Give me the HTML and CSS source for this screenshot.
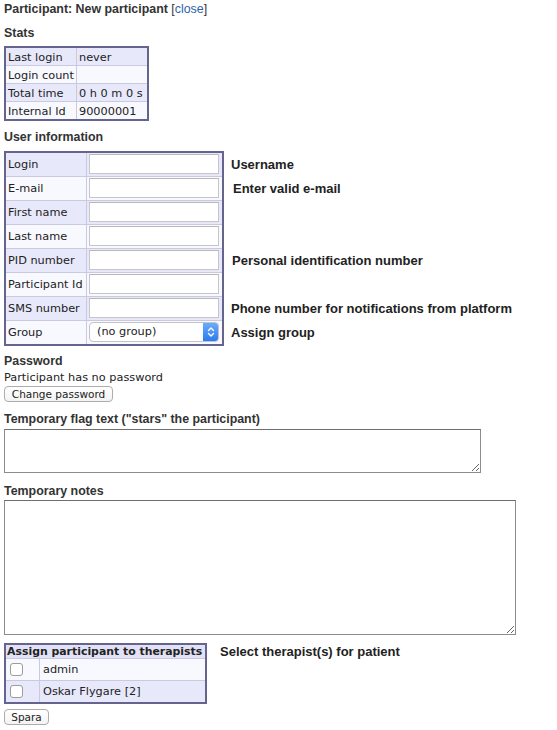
FILE: index.html
```html
<!DOCTYPE html>
<html>
<head>
<meta charset="utf-8">
<title>Participant: New participant</title>
<link rel="stylesheet" href="styles.css">
</head>
<body class="page">
  <div class="title">Participant: New participant <span class="close">[<a href="#" class="close-link">close</a>]</span></div>

  <h3 class="heading heading-stats">Stats</h3>
  <table class="grid stats">
    <tr class="row-a"><td class="stats-label">Last login</td><td class="stats-value">never</td></tr>
    <tr class="row-b"><td class="stats-label">Login count</td><td class="stats-value"></td></tr>
    <tr class="row-a"><td class="stats-label">Total time</td><td class="stats-value">0 h 0 m 0 s</td></tr>
    <tr class="row-b"><td class="stats-label">Internal Id</td><td class="stats-value">90000001</td></tr>
  </table>

  <h3 class="heading heading-user">User information</h3>
  <div class="userinfo">
    <table class="grid user">
      <tr class="row-a"><td class="user-label">Login</td><td class="user-field"><input class="text-input" type="text"></td></tr>
      <tr class="row-b"><td class="user-label">E-mail</td><td class="user-field"><input class="text-input" type="text"></td></tr>
      <tr class="row-a"><td class="user-label">First name</td><td class="user-field"><input class="text-input" type="text"></td></tr>
      <tr class="row-b"><td class="user-label">Last name</td><td class="user-field"><input class="text-input" type="text"></td></tr>
      <tr class="row-a"><td class="user-label">PID number</td><td class="user-field"><input class="text-input" type="text"></td></tr>
      <tr class="row-b"><td class="user-label">Participant Id</td><td class="user-field"><input class="text-input" type="text"></td></tr>
      <tr class="row-a"><td class="user-label">SMS number</td><td class="user-field"><input class="text-input" type="text"></td></tr>
      <tr class="row-b"><td class="user-label">Group</td><td class="user-field">
        <span class="select">
          <select class="select-native"><option>(no group)</option></select>
          <span class="select-arrow"><svg width="8" height="12" viewBox="0 0 8 12"><path d="M1.5 4.5 L4 2 L6.5 4.5 M1.5 7.5 L4 10 L6.5 7.5" fill="none" stroke="#fff" stroke-width="1.4" stroke-linecap="round" stroke-linejoin="round"/></svg></span>
        </span>
      </td></tr>
    </table>
    <div class="hints">
      <div class="hint">Username</div>
      <div class="hint hint-shift">Enter valid e-mail</div>
      <div class="hint"></div>
      <div class="hint"></div>
      <div class="hint hint-shift1">Personal identification number</div>
      <div class="hint"></div>
      <div class="hint">Phone number for notifications from platform</div>
      <div class="hint">Assign group</div>
    </div>
  </div>

  <h3 class="heading heading-password">Password</h3>
  <div class="password-text">Participant has no password</div>
  <button class="btn btn-change" type="button">Change password</button>

  <h3 class="heading heading-flag">Temporary flag text ("stars" the participant)</h3>
  <textarea class="area area-flag"></textarea>

  <h3 class="heading heading-notes">Temporary notes</h3>
  <textarea class="area area-notes"></textarea>

  <div class="therapists">
    <table class="grid ther">
      <tr class="ther-head"><th class="ther-th" colspan="2">Assign participant to therapists</th></tr>
      <tr class="row-b"><td class="ther-check"><input class="check" type="checkbox"></td><td class="ther-name">admin</td></tr>
      <tr class="row-a"><td class="ther-check"><input class="check" type="checkbox"></td><td class="ther-name">Oskar Flygare [2]</td></tr>
    </table>
    <div class="hint hint-ther">Select therapist(s) for patient</div>
  </div>

  <button class="btn btn-save" type="button">Spara</button>
</body>
</html>
```
FILE: styles.css
```css
html, body {
  background: #fff;
}
.page {
  margin: 0;
  padding: 2px 4px 0 4px;
  font-family: "DejaVu Sans", Verdana, sans-serif;
  font-size: 11.3px;
  color: #222;
}
.title {
  font: bold 12.4px/14px "Liberation Sans", Arial, sans-serif;
  color: #333;
}
.close {
  font-weight: normal;
}
.close-link {
  color: #2d63a6;
  text-decoration: none;
}
.heading {
  font: bold 12.4px/14px "Liberation Sans", Arial, sans-serif;
  color: #333;
  margin: 0;
}
.heading-stats { margin: 10px 0 6px; }
.heading-user { margin: 9px 0 7px; }
.heading-password { margin: 8px 0 0; }
.heading-flag { margin: 10px 0 3px; }
.heading-notes { margin: 11px 0 2px; }

.grid {
  border-collapse: separate;
  border-spacing: 0;
  border: 2px solid #64648f;
}
.grid td, .grid th {
  border-right: 1px solid #c9c9e2;
  border-bottom: 1px solid #c9c9e2;
  padding: 0;
  font: 11.3px/13px "DejaVu Sans", Verdana, sans-serif;
  color: #222;
  text-align: left;
  vertical-align: middle;
  white-space: nowrap;
}
.grid td:last-child, .grid th:last-child { border-right: none; }
.grid tr:last-child td { border-bottom: none; }
.row-a td { background: #e8e8fb; }
.row-b td { background: #f8f8ff; }

/* stats */
.stats td {
  padding: 3px 2px 1px;
  height: 13px;
}
.stats-label { width: 66px; }
.stats-value { width: 66px; }

/* user info */
.userinfo {
  display: flex;
  align-items: flex-start;
  gap: 7px;
}
.user td { padding: 1px 0 2px; }
.user-label {
  width: 76px;
  padding-left: 2px !important;
  padding-right: 2px !important;
}
.user-field {
  width: 130px;
  padding-left: 2px !important;
  padding-right: 3px !important;
}
.text-input {
  display: block;
  box-sizing: border-box;
  width: 130px;
  height: 20px;
  margin: 0;
  border: 1px solid #c6c6c6;
  border-top-color: #b9b9b9;
  background: #fff;
  padding: 0 3px;
}
.select {
  display: flex;
  box-sizing: border-box;
  width: 130px;
  height: 20px;
  border: 1px solid #c4c4c4;
  border-radius: 4px;
  background: #fff;
  overflow: hidden;
}
.select-native {
  flex: 1;
  -webkit-appearance: none;
  appearance: none;
  border: none;
  background: transparent;
  font: 11.3px/18px "DejaVu Sans", Verdana, sans-serif;
  color: #222;
  padding: 0 0 0 7px;
  margin: 0;
  height: 18px;
  outline: none;
}
.select-arrow {
  width: 15px;
  display: flex;
  align-items: center;
  justify-content: center;
  background: linear-gradient(#6cacf8, #2a7cf0);
}
.hints {
  padding-top: 2px;
}
.hint {
  font: bold 13px/24px "Liberation Sans", Arial, sans-serif;
  color: #222;
  height: 24px;
  white-space: nowrap;
}
.hint-shift { padding-left: 2px; }
.hint-shift1 { padding-left: 1px; }

/* password */
.password-text {
  margin-top: 3px;
  line-height: 14px;
}
.btn {
  display: block;
  box-sizing: border-box;
  height: 16px;
  margin: 1px 0 0;
  padding: 0;
  border: 1px solid #adadad;
  border-radius: 4px;
  background: linear-gradient(#ffffff, #f3f3f3);
  font: 10.5px/14px "DejaVu Sans", Verdana, sans-serif;
  color: #222;
  white-space: nowrap;
  text-align: center;
}
.btn-change { width: 109px; }
.btn-save { width: 45px; margin-top: 5px; }

.area {
  display: block;
  box-sizing: border-box;
  margin: 0;
  border: 1px solid #8c8c8c;
  border-top-color: #6e6e6e;
  background: #fff;
  padding: 2px;
}
.area-flag { width: 477px; height: 44px; }
.area-notes { width: 512px; height: 135px; }

/* therapists */
.therapists {
  display: flex;
  align-items: flex-start;
  gap: 13px;
  margin-top: 8px;
}
.ther-th {
  font: bold 10.9px/13px "DejaVu Sans", Verdana, sans-serif !important;
  background: #e2e2f7;
  padding: 0 1px !important;
  height: 13px;
}
.ther td { height: 21px; }
.ther-check {
  width: 29px;
  padding-left: 4px !important;
}
.ther-name {
  width: 162px;
  padding-left: 3px !important;
}
.check {
  -webkit-appearance: none;
  appearance: none;
  display: block;
  width: 13px;
  height: 13px;
  margin: 0;
  border: 1px solid #9c9c9c;
  border-radius: 3px;
  background: #fff;
}
.hint-ther {
  line-height: 14px;
  height: 14px;
  padding-top: 2px;
}
```
